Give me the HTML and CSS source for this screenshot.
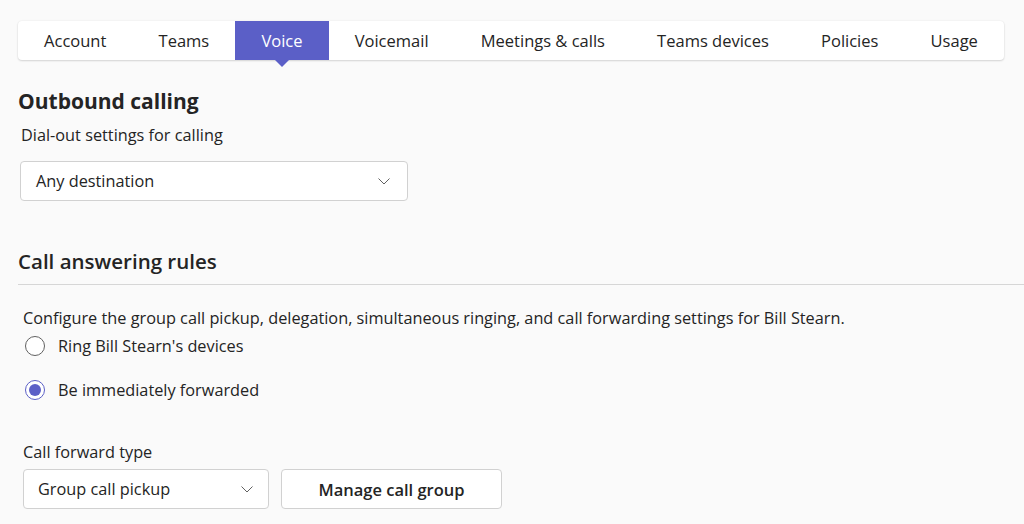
FILE: index.html
```html
<!DOCTYPE html>
<html lang="en">
<head>
<meta charset="utf-8">
<title>Voice settings</title>
<link rel="stylesheet" href="styles.css">
</head>
<body>
<div class="page">
  <nav class="tabs">
    <div class="tab">Account</div>
    <div class="tab">Teams</div>
    <div class="tab active">Voice</div>
    <div class="tab">Voicemail</div>
    <div class="tab">Meetings &amp; calls</div>
    <div class="tab">Teams devices</div>
    <div class="tab">Policies</div>
    <div class="tab">Usage</div>
  </nav>

  <section class="outbound">
    <h2 class="h-bold">Outbound calling</h2>
    <div class="label">Dial-out settings for calling</div>
    <div class="select select-wide">
      <span>Any destination</span>
      <svg class="chev" width="12" height="7" viewBox="0 0 12 7"><path d="M0.5 0.5 L6 6 L11.5 0.5" fill="none" stroke="#616161" stroke-width="1"/></svg>
    </div>
  </section>

  <section class="answering">
    <h2 class="h-semi">Call answering rules</h2>
    <div class="divider"></div>
    <div class="inner">
      <p class="desc">Configure the group call pickup, delegation, simultaneous ringing, and call forwarding settings for Bill Stearn.</p>
      <div class="radio-row first">
        <span class="radio"></span>
        <span>Ring Bill Stearn's devices</span>
      </div>
      <div class="radio-row second">
        <span class="radio checked"></span>
        <span>Be immediately forwarded</span>
      </div>
      <div class="label fwd">Call forward type</div>
      <div class="controls">
        <div class="select select-narrow">
          <span>Group call pickup</span>
          <svg class="chev" width="12" height="7" viewBox="0 0 12 7"><path d="M0.5 0.5 L6 6 L11.5 0.5" fill="none" stroke="#616161" stroke-width="1"/></svg>
        </div>
        <button class="btn">Manage call group</button>
      </div>
    </div>
  </section>
</div>
</body>
</html>
```
FILE: styles.css
```css
html, body {
  margin: 0;
  padding: 0;
  background: #fafafa;
  color: #242424;
  font-family: "Segoe UI", "Open Sans", "Noto Sans", sans-serif;
  font-size: 16.3px;
}
.page {
  padding: 21px 0 0 18px;
  height: 524px;
  box-sizing: border-box;
  overflow: hidden;
}
.tabs {
  display: flex;
  width: 986px;
  height: 39px;
  background: #fff;
  border-radius: 4px;
  box-shadow: 0 1px 2px rgba(0,0,0,0.14), 0 0 2px rgba(0,0,0,0.08);
}
.tab {
  position: relative;
  flex: 1 1 auto;
  text-align: center;
  line-height: 39px;
  font-size: 16.5px;
  white-space: nowrap;
  color: #242424;
}
.tab.active {
  background: #5b5fc7;
  color: #fff;
}
.tab.active::after {
  content: "";
  position: absolute;
  left: 50%;
  bottom: -7px;
  margin-left: -7px;
  border-left: 7px solid transparent;
  border-right: 7px solid transparent;
  border-top: 7px solid #5b5fc7;
}
h2 {
  margin: 0;
  line-height: 28px;
}
.h-bold { font-size: 21px; font-weight: 700; margin-top: 27px; }
.h-semi { font-size: 20.5px; font-weight: 600; margin-top: 46px; }
.label {
  line-height: 22px;
  margin: 9px 0 0 3px;
}
.select {
  display: flex;
  align-items: center;
  justify-content: space-between;
  height: 40px;
  background: #fff;
  border: 1px solid #d1d1d1;
  border-radius: 4px;
  box-sizing: border-box;
}
.select-wide {
  width: 388px;
  margin: 15px 0 0 2px;
  padding: 0 17px 0 15px;
}
.select-narrow {
  width: 246px;
  padding: 0 15px 0 14px;
}
.chev { display: block; }
.divider {
  margin-top: 9px;
  height: 1px;
  background: #d6d6d6;
}
.inner { padding-left: 5px; }
.desc {
  margin: 22px 0 0 0;
  line-height: 22px;
}
.radio-row {
  display: flex;
  align-items: center;
  height: 28px;
  gap: 13px;
  padding-left: 2px;
}
.radio-row.first { margin-top: 3px; }
.radio-row.second { margin-top: 16px; }
.radio {
  width: 20px;
  height: 20px;
  border: 1px solid #616161;
  border-radius: 50%;
  box-sizing: border-box;
  background: #fff;
  position: relative;
}
.radio.checked {
  border-color: #5b5fc7;
}
.radio.checked::after {
  content: "";
  position: absolute;
  left: 3px;
  top: 3px;
  width: 12px;
  height: 12px;
  border-radius: 50%;
  background: #5b5fc7;
}
.label.fwd { margin: 37px 0 0 0; }
.controls {
  display: flex;
  gap: 12px;
  margin-top: 6px;
}
.btn {
  width: 221px;
  height: 40px;
  background: #fff;
  border: 1px solid #d1d1d1;
  border-radius: 4px;
  font-family: inherit;
  font-size: 16.5px;
  font-weight: 600;
  color: #242424;
}
```
